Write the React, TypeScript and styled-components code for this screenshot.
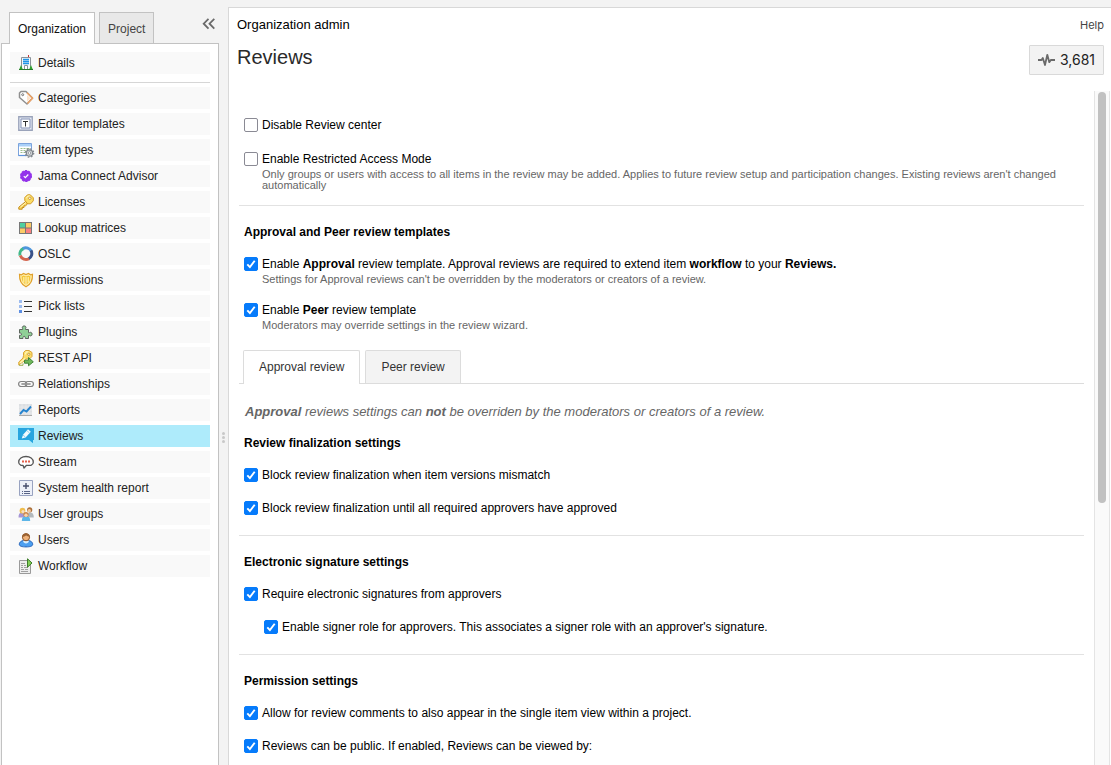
import React, { useState } from 'react';
import styled, { createGlobalStyle, css } from 'styled-components';

const GlobalStyle = createGlobalStyle`
  *, *::before, *::after { box-sizing: border-box; }
  body {
    margin: 0;
    background: #f3f3f3;
    color: #000;
    font: 12px/15px "Liberation Sans", Arial, Helvetica, sans-serif;
  }
  h1, h2, p, ul { margin: 0; padding: 0; }
  button { font: inherit; cursor: pointer; }
`;

/* ---------- layout ---------- */

const Shell = styled.div`
  display: flex;
  height: 100vh;
  overflow: hidden;
`;

const Sidebar = styled.aside`
  flex: 0 0 219px;
  display: flex;
  flex-direction: column;
  padding: 12px 0 0 1px;
`;

const SideTop = styled.div`
  display: flex;
  align-items: flex-start;
  justify-content: space-between;
  padding: 0 2px 0 8px;
`;

const SideTabs = styled.div`
  display: flex;
  gap: 4px;
`;

const SideTab = styled.button<{ $active: boolean }>`
  height: 31px;
  padding: 2px 8px 0;
  border: 1px solid #c2c2c2;
  border-bottom: 0;
  background: #e8e8e8;
  color: #444;
  ${({ $active }) =>
    $active &&
    css`
      height: 32px;
      margin-bottom: -1px;
      background: #fff;
      color: #111;
      position: relative;
    `}
`;

const CollapseButton = styled.button`
  display: flex;
  margin-top: 4px;
  padding: 0;
  border: 0;
  background: none;
`;

const SidePanel = styled.nav`
  flex: 1;
  padding: 8px;
  border: 1px solid #c2c2c2;
  border-bottom: 0;
  background: #fff;
`;

const NavList = styled.ul`
  display: flex;
  flex-direction: column;
  gap: 4px;
  list-style: none;

  & + & {
    margin-top: 8px;
    padding-top: 4px;
    border-top: 1px solid #d6d6d6;
  }
`;

const NavLink = styled.a<{ $active: boolean }>`
  display: flex;
  align-items: center;
  gap: 4px;
  height: 22px;
  padding-left: 8px;
  background: ${({ $active }) => ($active ? '#aeebfb' : '#f9f9f9')};
  color: #222;
  text-decoration: none;
`;

const Splitter = styled.div`
  flex: 0 0 9px;
  display: flex;
  flex-direction: column;
  align-items: center;
  justify-content: center;
  gap: 1px;
  padding-top: 109px;
`;

const SplitterDot = styled.span`
  width: 3px;
  height: 3px;
  border-radius: 50%;
  background: #c8c8c8;
`;

const Main = styled.main`
  flex: 1;
  min-width: 0;
  display: flex;
  flex-direction: column;
  margin-top: 7px;
  border: solid #d8d8d8;
  border-width: 1px 0 0 1px;
  background: #fff;
`;

const Header = styled.header`
  display: flex;
  justify-content: space-between;
  height: 83px;
  padding: 8px 7px 0 8px;
`;

const Area = styled.p`
  font-size: 13px;
  line-height: 18px;
`;

const Title = styled.h1`
  margin-top: 10px;
  color: #2a2a2a;
  font-size: 20px;
  font-weight: 400;
  line-height: 26px;
`;

const HeaderTools = styled.div`
  display: flex;
  flex-direction: column;
  align-items: flex-end;
  gap: 11px;
`;

const HelpLink = styled.a`
  color: #444;
  font: 11px/18px Inter, "Liberation Sans", sans-serif;
  text-decoration: none;
`;

const ActivityButton = styled.button`
  display: flex;
  align-items: center;
  gap: 6px;
  height: 30px;
  padding: 0 8px;
  border: 1px solid #d9d9d9;
  border-radius: 1px;
  background: #f3f3f3;
  color: #222;
  font: 14px/18px Inter, "Liberation Sans", sans-serif;
`;

const Body = styled.div`
  flex: 1;
  min-height: 0;
  display: flex;
  padding-right: 1px;
`;

const Content = styled.div`
  flex: 1;
  min-width: 0;
  padding: 0 10px;
  overflow-y: auto;
  scrollbar-width: none;
`;

const ScrollTrack = styled.div`
  flex: 0 0 16px;
  padding: 1px 3px 0;
  border: solid #e4e4e4;
  border-width: 0 1px;
  background: #fafafa;
`;

const ScrollThumb = styled.div`
  width: 8px;
  height: 61%;
  border-radius: 4px;
  background: #c1c1c1;
`;

/* ---------- settings ---------- */

const Section = styled.section<{ $intro?: boolean }>`
  display: flex;
  flex-direction: column;
  gap: ${({ $intro }) => ($intro ? 19 : 18)}px;
  padding: ${({ $intro }) => ($intro ? '27px 5px 14px' : '19px 5px')};

  & + & {
    border-top: 1px solid #e2e2e2;
  }
`;

const PanelSection = styled(Section)`
  padding-top: 0;
`;

const SectionTitle = styled.h2`
  margin-bottom: -1px;
  font-size: 12px;
  font-weight: 700;
  line-height: 15px;
`;

const CheckRow = styled.div<{ $nested?: boolean }>`
  display: grid;
  grid-template-columns: 14px 1fr;
  column-gap: 4px;
  row-gap: 2px;
  margin-left: ${({ $nested }) => ($nested ? 20 : 0)}px;
`;

const Box = styled.input`
  grid-area: 1 / 1;
  appearance: none;
  width: 14px;
  height: 14px;
  margin: 0;
  border: 1px solid #8a8a94;
  border-radius: 2px;
  background: #fff;

  &:checked {
    border-color: #067bfb;
    background: #067bfb;
  }
`;

const Tick = styled.svg`
  grid-area: 1 / 1;
  z-index: 1;
  width: 14px;
  height: 14px;
  pointer-events: none;
  visibility: hidden;

  input:checked + & {
    visibility: visible;
  }
`;

const CheckLabel = styled.label`
  grid-area: 1 / 2;
`;

const Hint = styled.p`
  grid-column: 2;
  color: #666;
  font-size: 11px;
  line-height: 11px;
`;

const TabBar = styled.div`
  display: flex;
  gap: 5px;
  padding-left: 4px;
  border-bottom: 1px solid #dcdcdc;
`;

const TabButton = styled.button<{ $active: boolean }>`
  height: 33px;
  padding: 0 15px;
  border: 1px solid #dcdcdc;
  border-bottom: 0;
  border-radius: 2px 2px 0 0;
  background: #f3f3f3;
  color: #333;
  ${({ $active }) =>
    $active &&
    css`
      height: 34px;
      margin-bottom: -1px;
      background: #fff;
      position: relative;
    `}
`;

const PanelNote = styled.p`
  padding: 20px 6px 17px;
  color: #666;
  font-size: 13px;
  font-style: italic;
`;

/* ---------- icons ---------- */

const IconSvg = styled.svg`
  flex: none;
  width: 16px;
  height: 16px;
  overflow: visible;
`;

const icons: Record<string, React.ReactNode> = {
  details: (
    <>
      <path d="M10 0h1v2h-1z" fill="#c33" />
      <path d="M3.500 14.500V2.500h9v12z" fill="#f4f8fb" stroke="#8b9299" />
      <path d="M5 4.500h6M5 6.500h6M5 8.500h6" stroke="#1f93e8" strokeWidth="1.400" />
      <path d="M6.500 14.500v-4h3v4" fill="#fff" stroke="#8b9299" />
      <path d="M1 15l2-5 2 5zM11 15l2-5 2 5z" fill="#2fa32f" />
      <path d="M1 14.500h14" stroke="#277a2c" />
    </>
  ),
  categories: (
    <>
      <path d="M1.500 3 3 1.500h5l6.500 6.500-5.500 6L1.500 7.500z" fill="#fff" stroke="#8f8f8f" strokeWidth="1.500" strokeLinejoin="round" />
      <path d="M9 2.800l5.500 5.400-5 5.300" fill="none" stroke="#efa263" strokeWidth="1.500" />
      <path d="M9 5l3.500 3.300L9 12z" fill="#fde3cc" />
      <circle cx="4.700" cy="4.700" r="1" fill="#fff" stroke="#777" />
    </>
  ),
  editor: (
    <>
      <path d="M.75.75h13.500v13.500H.75z" fill="#e4e9f4" stroke="#9aa3ba" strokeWidth="1.300" />
      <path d="M3 3h9v9H3z" fill="#fff" stroke="#8391b5" />
      <path d="M5 5.500h5M7.500 5.500v5" stroke="#333" />
    </>
  ),
  itemTypes: (
    <>
      <path d="M.5 1.500h13v12H.5z" fill="#fff" stroke="#7ba3dc" />
      <path d="M1 2h12v2.500H1z" fill="#a9d0f8" />
      <path d="M2.500 6.500h2m1 0h2m1 0h3M2.500 8.500h2m1 0h2m1 0h3M2.500 10.500h2m1 0h2" stroke="#9bbd8c" />
      <path d="M.5 13.500h9" stroke="#5d93dc" strokeWidth="1.200" />
      <circle cx="11.500" cy="11" r="3.200" fill="#d5d8db" stroke="#7f858b" strokeWidth="1.200" />
      <circle cx="11.500" cy="11" r="4.200" fill="none" stroke="#858b91" strokeWidth="1.300" strokeDasharray="1.650 1.650" />
      <circle cx="11.500" cy="11" r="1.300" fill="#fff" stroke="#858b91" strokeWidth=".8" />
    </>
  ),
  advisor: (
    <>
      <circle cx="8" cy="8" r="5.600" fill="#9333ea" />
      <circle cx="8" cy="8" r="5.400" fill="none" stroke="#9333ea" strokeWidth="1.200" strokeDasharray="2.200 1.190" />
      <path d="M5.800 8.200l1.500 1.500 3-3.200" fill="none" stroke="#fff" strokeWidth="1.200" />
    </>
  ),
  licenses: (
    <>
      <path d="M8 7.200L.8 13.200v2h3.400v-1.700h1.800v-1.700h1.500L9.500 10z" fill="#fbd75c" stroke="#c48c1c" strokeLinejoin="round" />
      <path d="M9.500.8h2.800l3 3v3l-2.600 3h-3L6.800 6.500v-3z" fill="#fbdc65" stroke="#d19a27" strokeLinejoin="round" />
      <path d="M8 4.500L10 2h2M2.500 13l5.500-4.500" fill="none" stroke="#fff5bc" />
      <circle cx="11.800" cy="4.300" r="1.200" fill="#fff" stroke="#bd8c2b" strokeWidth=".8" />
    </>
  ),
  lookup: (
    <>
      <path d="M1 2h13v12H1z" fill="#777" />
      <path d="M2 3h5v4.500H2z" fill="#4fd0a0" />
      <path d="M8 3h5v4.500H8zM2 8.500h5V13H2z" fill="#fbcb66" />
      <path d="M8 8.500h5V13H8z" fill="#fa8080" />
    </>
  ),
  oslc: (
    <g fill="none" strokeWidth="3">
      <path d="M2 9.500A6 6 0 0 1 5.500 2.500" stroke="#41b889" />
      <path d="M5 2.600A6 6 0 0 1 13.300 5.200" stroke="#4e96dc" />
      <path d="M13 4.600a6 6 0 0 1-2.600 8.400" stroke="#3a528a" />
      <path d="M11 12.700A6 6 0 0 1 2.300 9.500" stroke="#d4654f" />
    </g>
  ),
  permissions: (
    <>
      <path d="M1.500 2.200l2 .6L5.500 1.500 8 2.500l2.500-1 2 1.300 2-.6c.2 6-1 10-6.500 12.600C2.500 12.200 1.300 8.200 1.500 2.200z" fill="#fff0ae" stroke="#e0a02b" strokeWidth="1.200" />
      <path d="M3.500 4.500l2-1L8 4.500l2.500-1 2 1c0 4-1.500 6.500-4.500 8.300C5 11 3.500 8.500 3.500 4.500z" fill="#f5c63a" />
      <path d="M5.800 5v5.500M10.200 5v5.500" stroke="#fff1a8" strokeWidth="1.200" />
      <path d="M8 5v7.500" stroke="#fdf6cf" strokeWidth="1" />
    </>
  ),
  pickLists: (
    <>
      <path d="M1 2h3v3H1zM1 7h3v3H1z" fill="#9dbcf0" />
      <path d="M1 12h3v3H1z" fill="#5d8fe3" />
      <path d="M6 3.500h8M6 8.500h8M6 13.500h8" stroke="#333" />
    </>
  ),
  plugins: (
    <path
      d="M1.500 5.500h3.200c.5-.6-.6-1.200-.4-2.300.3-1.800 3.600-1.700 3.700.1.100 1-1 1.500-.5 2.200h3v3.200c.6.500 1.200-.6 2.300-.4 1.900.4 1.700 3.500-.1 3.600-1 .1-1.600-1-2.200-.4v3H7.300c-.5-.6.600-1.500-.5-2-1.200-.4-2.200.400-1.800 2H1.500v-3.200c.6-.4 1.500.5 2-.5.300-1.200-.500-2-2-1.700z"
      fill="#8fd096"
      stroke="#5c665e"
    />
  ),
  rest: (
    <>
      <path d="M5.500 5.500V2.500l2-2H11l3 2v4l-2 2-3.500.5-7.700 6v-3L5 8z" fill="#fbdc69" stroke="#d9a436" strokeLinejoin="round" />
      <path d="M7 4.500l1.500-2.700h2M2 13l5-4.500" fill="none" stroke="#fff5bc" strokeWidth="1.200" />
      <circle cx="10.800" cy="4.300" r="1.100" fill="#fff" stroke="#bd8c2b" strokeWidth=".8" />
      <path d="M6.500 10.200h4V7.500l4.800 4.300-4.800 4v-2.600h-4z" fill="#6fb95a" stroke="#438539" strokeLinejoin="round" />
      <path d="M1 15.300h4v-2" fill="none" stroke="#9cb04f" />
    </>
  ),
  relationships: (
    <g fill="none">
      <rect x=".6" y="5.500" width="8" height="5" rx="2.500" stroke="#808080" strokeWidth="1.200" />
      <rect x="7.400" y="5.500" width="8" height="5" rx="2.500" stroke="#808080" strokeWidth="1.200" />
      <path d="M3.500 8h9" stroke="#777" strokeWidth="1.600" />
      <path d="M4 8h8" stroke="#dcdcdc" strokeWidth=".5" />
    </g>
  ),
  reports: (
    <>
      <path d="M1 2h13v12H1z" fill="#dcdfe2" />
      <path d="M1 5h13M1 8h13M1 11h13M4 2v12M8 2v12M11 2v12" stroke="#eceeef" strokeWidth=".7" />
      <path d="M1 13.500h13" stroke="#aaa" />
      <path d="M2 12l3.500-4 3 1.500L13 4.500" fill="none" stroke="#2584cf" strokeWidth="1.900" />
    </>
  ),
  reviews: (
    <>
      <path d="M0 0h16v12h-1v3.200L11 12H0z" fill="#27a5df" />
      <path d="M3.800 10.500L5 6.800l5-5.600 2.800 2.500-5.200 5.700z" fill="#f3fbfe" />
      <path d="M8.800 2.600l2.800 2.500M5 7l2.500 2.200" stroke="#7cc8e8" strokeWidth=".8" />
    </>
  ),
  stream: (
    <>
      <path d="M5 11.300H3C1.500 10.700.7 9.600.7 8.200.7 4.800 4 2.500 8 2.500s7.300 2.300 7.300 5.700c0 1.400-.8 2.500-2.300 3.100H8.500L6 14z" fill="#fff" stroke="#555" strokeWidth="1.300" strokeLinejoin="round" />
      <path d="M4 6.500h2v2H4zM7 6.500h2v2H7zM10 6.500h2v2h-2z" fill="#e5604b" />
    </>
  ),
  health: (
    <>
      <path d="M1.500.5h13v15h-13z" fill="#edf0f8" stroke="#98a2c0" />
      <path d="M5 6h6M8 3v6" stroke="#454d6b" strokeWidth="1.400" />
      <path d="M4 11.500h1m1 0h6M4 13.500h1m1 0h6" stroke="#596485" />
    </>
  ),
  groups: (
    <>
      <path d="M.5 11.500c0-3.500 1-5 3.500-5s3.500 1.500 3.500 5z" fill="#a595d4" />
      <circle cx="4.500" cy="4.700" r="2.900" fill="#efbd4e" />
      <circle cx="5" cy="5.500" r="1.600" fill="#f9dfc4" />
      <path d="M9 11.500c0-3.500 1-5 3.300-5s3.500 1.500 3.500 5z" fill="#b3b9bd" />
      <circle cx="11.700" cy="3.800" r="2.600" fill="#ad7039" />
      <circle cx="11.300" cy="4.700" r="1.700" fill="#f3c99d" />
      <path d="M3.800 15c0-3.500 1.300-5 4.200-5s4.200 1.500 4.200 5z" fill="#5db6e8" />
      <circle cx="8" cy="8.500" r="2.600" fill="#cc8349" />
      <circle cx="8" cy="9.200" r="1.700" fill="#f8d4ae" />
    </>
  ),
  users: (
    <>
      <path d="M1.300 12.300C1.500 9.500 4 8.300 8 8.300s6.500 1.200 6.700 4c0 2-3 2.600-6.700 2.600s-6.700-.6-6.700-2.600z" fill="#4c9ff0" stroke="#2361b8" />
      <path d="M5 8.800c.5 3.700 5.500 3.700 6 0z" fill="#d8edfc" />
      <circle cx="8" cy="5.200" r="3.600" fill="#efb27a" stroke="#8a5428" />
      <path d="M4 4.800C4.300.3 11.700.3 12 4.800 10 4.500 9 4 8 3.500c-1 .8-2 1.300-4 1.300z" fill="#9a6232" />
    </>
  ),
  workflow: (
    <>
      <path d="M1.500 2.500h10l1 4v9h-11z" fill="#ededed" stroke="#9a9a9a" />
      <path d="M3 5.500h4M3 7.500h2m1 0h2M3 9.500h2m1 0h4M3 11.500h3m1 0h3M3 13.500h7" stroke="#a0a0a0" />
      <path d="M9.500.8v8.400L14 5z" fill="#82cf57" stroke="#3c7c29" strokeLinejoin="round" />
    </>
  ),
};

const Icon = ({ name }: { name: string }) => (
  <IconSvg viewBox="0 0 16 16" aria-hidden="true">
    {icons[name]}
  </IconSvg>
);

const navGroups: [string, string][][] = [
  [['Details', 'details']],
  [
    ['Categories', 'categories'],
    ['Editor templates', 'editor'],
    ['Item types', 'itemTypes'],
    ['Jama Connect Advisor', 'advisor'],
    ['Licenses', 'licenses'],
    ['Lookup matrices', 'lookup'],
    ['OSLC', 'oslc'],
    ['Permissions', 'permissions'],
    ['Pick lists', 'pickLists'],
    ['Plugins', 'plugins'],
    ['REST API', 'rest'],
    ['Relationships', 'relationships'],
    ['Reports', 'reports'],
    ['Reviews', 'reviews'],
    ['Stream', 'stream'],
    ['System health report', 'health'],
    ['User groups', 'groups'],
    ['Users', 'users'],
    ['Workflow', 'workflow'],
  ],
];

type CheckProps = {
  id: string;
  checked?: boolean;
  nested?: boolean;
  hint?: string;
  children: React.ReactNode;
};

const Check = ({ id, checked, nested, hint, children }: CheckProps) => (
  <CheckRow $nested={nested}>
    <Box type="checkbox" id={id} defaultChecked={checked} />
    <Tick viewBox="0 0 14 14" aria-hidden="true">
      <path d="M3.300 7.300l2.600 2.800 4.800-6.400" fill="none" stroke="#fff" strokeWidth="1.900" />
    </Tick>
    <CheckLabel htmlFor={id}>{children}</CheckLabel>
    {hint && <Hint>{hint}</Hint>}
  </CheckRow>
);

export default function App() {
  const [tab, setTab] = useState('Approval review');
  const [scope, setScope] = useState('Organization');

  return (
    <>
      <GlobalStyle />
      <Shell>
        <Sidebar>
          <SideTop>
            <SideTabs role="tablist">
              {['Organization', 'Project'].map((name) => (
                <SideTab key={name} role="tab" aria-selected={scope === name} $active={scope === name} onClick={() => setScope(name)}>
                  {name}
                </SideTab>
              ))}
            </SideTabs>
            <CollapseButton aria-label="Collapse sidebar">
              <IconSvg viewBox="0 0 16 16">
                <path d="M7.500 2.800L2.700 7.700l4.800 4.900M13.300 2.800L8.500 7.700l4.800 4.900" fill="none" stroke="#6a6a6a" strokeWidth="1.800" />
              </IconSvg>
            </CollapseButton>
          </SideTop>
          <SidePanel>
            {navGroups.map((group) => (
              <NavList key={group[0][0]}>
                {group.map(([label, icon]) => (
                  <li key={label}>
                    <NavLink href="#" $active={label === 'Reviews'}>
                      <Icon name={icon} />
                      {label}
                    </NavLink>
                  </li>
                ))}
              </NavList>
            ))}
          </SidePanel>
        </Sidebar>
        <Splitter>
          <SplitterDot />
          <SplitterDot />
          <SplitterDot />
        </Splitter>
        <Main>
          <Header>
            <div>
              <Area>Organization admin</Area>
              <Title>Reviews</Title>
            </div>
            <HeaderTools>
              <HelpLink href="#">Help</HelpLink>
              <ActivityButton>
                <IconSvg viewBox="0 0 16 16">
                  <path d="M0 8h3.500l1.300-2L7 13 9.300 2.800l2 7.400 1.500-2.200H17" fill="none" stroke="#6a6a6a" strokeWidth="1.800" strokeLinejoin="round" />
                </IconSvg>
                3,681
              </ActivityButton>
            </HeaderTools>
          </Header>
          <Body>
            <Content>
              <Section $intro>
                <Check id="disable">Disable Review center</Check>
                <Check
                  id="restricted"
                  hint="Only groups or users with access to all items in the review may be added. Applies to future review setup and participation changes. Existing reviews aren't changed automatically"
                >
                  Enable Restricted Access Mode
                </Check>
              </Section>
              <Section>
                <SectionTitle>Approval and Peer review templates</SectionTitle>
                <Check id="approval" checked hint="Settings for Approval reviews can't be overridden by the moderators or creators of a review.">
                  Enable <b>Approval</b> review template. Approval reviews are required to extend item <b>workflow</b> to your <b>Reviews.</b>
                </Check>
                <Check id="peer" checked hint="Moderators may override settings in the review wizard.">
                  Enable <b>Peer</b> review template
                </Check>
              </Section>
              <TabBar role="tablist">
                {['Approval review', 'Peer review'].map((name) => (
                  <TabButton key={name} role="tab" aria-selected={tab === name} $active={tab === name} onClick={() => setTab(name)}>
                    {name}
                  </TabButton>
                ))}
              </TabBar>
              <PanelNote>
                <b>Approval</b> reviews settings can <b>not</b> be overriden by the moderators or creators of a review.
              </PanelNote>
              <PanelSection>
                <SectionTitle>Review finalization settings</SectionTitle>
                <Check id="mismatch" checked>Block review finalization when item versions mismatch</Check>
                <Check id="until" checked>Block review finalization until all required approvers have approved</Check>
              </PanelSection>
              <Section>
                <SectionTitle>Electronic signature settings</SectionTitle>
                <Check id="esign" checked>Require electronic signatures from approvers</Check>
                <Check id="signer" checked nested>
                  Enable signer role for approvers. This associates a signer role with an approver's signature.
                </Check>
              </Section>
              <Section>
                <SectionTitle>Permission settings</SectionTitle>
                <Check id="comments" checked>Allow for review comments to also appear in the single item view within a project.</Check>
                <Check id="public" checked>Reviews can be public. If enabled, Reviews can be viewed by:</Check>
              </Section>
            </Content>
            <ScrollTrack>
              <ScrollThumb />
            </ScrollTrack>
          </Body>
        </Main>
      </Shell>
    </>
  );
}
